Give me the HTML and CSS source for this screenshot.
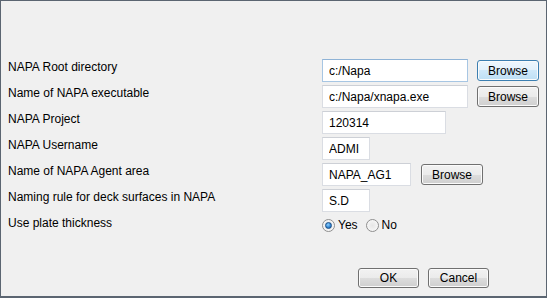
FILE: index.html
```html
<!DOCTYPE html>
<html lang="en">
<head>
    <meta charset="UTF-8">
    <meta name="viewport" content="width=device-width, initial-scale=1.0">
    <title>NAPA settings</title>
    <link rel="stylesheet" href="styles.css">
</head>
<body>
    <div class="dialog">
        <div class="settings">
            <label class="label">NAPA Root directory</label>
            <div class="cell">
                <input type="text" class="field field-long field-focus" value="c:/Napa">
                <button class="btn btn-hover">Browse</button>
            </div>

            <label class="label">Name of NAPA executable</label>
            <div class="cell">
                <input type="text" class="field field-long" value="c:/Napa/xnapa.exe">
                <button class="btn">Browse</button>
            </div>

            <label class="label">NAPA Project</label>
            <div class="cell">
                <input type="text" class="field field-mid" value="120314">
            </div>

            <label class="label">NAPA Username</label>
            <div class="cell">
                <input type="text" class="field field-short" value="ADMI">
            </div>

            <label class="label">Name of NAPA Agent area</label>
            <div class="cell">
                <input type="text" class="field field-agent" value="NAPA_AG1">
                <button class="btn btn-agent">Browse</button>
            </div>

            <label class="label">Naming rule for deck surfaces in NAPA</label>
            <div class="cell">
                <input type="text" class="field field-short" value="S.D">
            </div>

            <label class="label">Use plate thickness</label>
            <div class="cell radios">
                <span class="radio-item"><span class="radio checked"></span>Yes</span>
                <span class="radio-item"><span class="radio"></span>No</span>
            </div>
        </div>

        <div class="actions">
            <button class="btn btn-action">OK</button>
            <button class="btn btn-action">Cancel</button>
        </div>
    </div>
</body>
</html>
```

FILE: styles.css
```css
body {
    margin: 0;
    padding: 0;
    font-family: "Liberation Sans", Arial, sans-serif;
    font-size: 12px;
    color: #000;
    background-color: #f0f0f0;
}
.dialog {
    width: 547px;
    height: 298px;
    box-sizing: border-box;
    border: 1px solid #5b6571;
    border-bottom-width: 2px;
    background-color: #f0f0f0;
    padding: 58px 0 0 7px;
}
.settings {
    display: grid;
    grid-template-columns: 314px auto;
    grid-auto-rows: 23px;
    row-gap: 3px;
}
.label {
    line-height: 14px;
    padding-top: 1px;
}
.cell {
    display: flex;
    align-items: center;
    gap: 9px;
}
.field {
    box-sizing: border-box;
    height: 23px;
    padding: 0 6px;
    border: 1px solid #dadde3;
    border-top-color: #cdd0d6;
    background: #fff;
    font-family: inherit;
    font-size: 12px;
    color: #000;
    outline: none;
}
.field-focus {
    border-color: #a7c6e3;
    border-top-color: #8fb3d6;
}
.field-long {
    width: 146px;
}
.field-mid {
    width: 124px;
}
.field-short {
    width: 48px;
}
.field-agent {
    width: 89px;
}
.btn {
    box-sizing: border-box;
    width: 62px;
    height: 21px;
    padding: 0;
    border: 1px solid #707070;
    border-radius: 3px;
    background: linear-gradient(#f2f2f2 0%, #ebebeb 50%, #dddddd 50%, #cfcfcf 100%);
    box-shadow: inset 0 0 0 1px #fbfbfb;
    font-family: inherit;
    font-size: 12px;
    color: #000;
}
.btn-hover {
    border-color: #3c7fb1;
    background: linear-gradient(#eef7fd 0%, #e2f1fc 50%, #cfe8f9 50%, #bddff5 100%);
}
.btn-agent {
    margin-left: 1px;
}
.radios {
    align-items: flex-start;
    gap: 8px;
    padding-top: 4px;
}
.radio-item {
    display: flex;
    align-items: center;
    gap: 3px;
    line-height: 14px;
    margin-top: -1px;
}
.radio {
    box-sizing: border-box;
    width: 13px;
    height: 13px;
    border: 1px solid #8f8f8f;
    border-radius: 50%;
    background: radial-gradient(circle, #e6e6e6 0%, #f6f6f6 70%, #ffffff 100%);
    display: flex;
    align-items: center;
    justify-content: center;
}
.radio.checked::after {
    content: "";
    width: 5px;
    height: 5px;
    border-radius: 50%;
    border: 1px solid #1c4f86;
    background: radial-gradient(circle at 40% 35%, #8fd0ff 0%, #2e82cf 60%, #1b5a9c 100%);
}
.actions {
    display: flex;
    justify-content: flex-end;
    gap: 9px;
    margin-top: 30px;
    padding-right: 57px;
}
.btn-action {
    width: 61px;
    height: 20px;
}
```
